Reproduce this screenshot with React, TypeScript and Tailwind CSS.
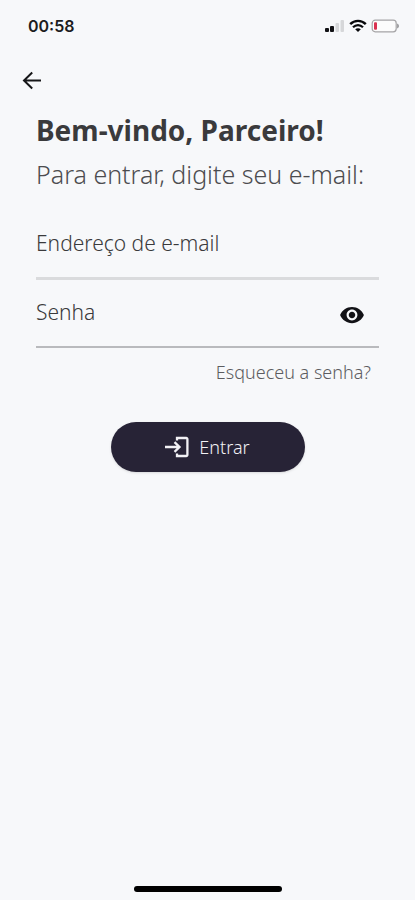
import { useState } from 'react';

const SignalIcon = () => (
  <svg width="20" height="14" viewBox="0 0 20 14" aria-hidden="true">
    <rect x="0" y="9" width="4" height="4" rx="1" fill="#111114" />
    <rect x="5" y="7" width="4" height="6" rx="1" fill="#111114" />
    <rect x="10.5" y="4" width="3.5" height="9" rx="1" fill="#d6d7d9" />
    <rect x="15.5" y="1" width="3.5" height="12" rx="1" fill="#d6d7d9" />
  </svg>
);

const WifiIcon = () => (
  <svg width="18" height="14" viewBox="0 0 18 14" fill="none" stroke="#08080a" aria-hidden="true">
    <path d="M1.2 5.2C5.6 .7 12.4 .7 16.8 5.2" strokeWidth="2.4" />
    <path d="M4 8.2c2.9-2.9 7.1-2.9 10 0" strokeWidth="2.2" />
    <path d="M9 13 6.2 10.3c1.6-1.5 4-1.5 5.6 0z" fill="#08080a" stroke="none" />
  </svg>
);

const BatteryIcon = () => (
  <svg width="28" height="14" viewBox="0 0 28 14" aria-hidden="true">
    <rect x="1.2" y="1.2" width="24" height="11.6" rx="3" fill="#fcfcfc" stroke="#a5a4a6" strokeWidth="1.2" />
    <rect x="3" y="3.2" width="3" height="7.6" rx="1" fill="#d9304f" />
    <path d="M26.2 4.6c2.2 .8 2.2 4 0 4.8z" fill="#8e8e91" />
  </svg>
);

const BackIcon = () => (
  <svg width="24" height="24" viewBox="0 0 24 24" fill="none" stroke="#161618" strokeWidth="2" aria-hidden="true">
    <path d="M21 12.5H4.5M12.2 4.5 4 12.5l8.2 8" />
  </svg>
);

const EyeIcon = () => (
  <svg width="26" height="26" viewBox="0 0 24 24" fill="#121216" aria-hidden="true">
    <path d="M12 4.5C7 4.5 2.73 7.61 1 12c1.73 4.39 6 7.5 11 7.5s9.27-3.11 11-7.5c-1.73-4.39-6-7.5-11-7.5zM12 17c-2.76 0-5-2.24-5-5s2.24-5 5-5 5 2.24 5 5-2.24 5-5 5zm0-8c-1.66 0-3 1.34-3 3s1.34 3 3 3 3-1.34 3-3-1.34-3-3-3z" />
  </svg>
);

const EnterIcon = () => (
  <svg width="24" height="24" viewBox="0 0 24 24" fill="none" stroke="#f2f1f5" strokeWidth="2.3" aria-hidden="true">
    <path d="M0 12h14M9.5 7.2l5 4.8-5 4.8" />
    <path d="M12 5.6V3h9.2a1.2 1.2 0 0 1 1.2 1.2v15.6a1.2 1.2 0 0 1-1.2 1.2H12v-2.6" />
  </svg>
);

const App = () => {
  const [email, setEmail] = useState('');
  const [password, setPassword] = useState('');
  const [showPassword, setShowPassword] = useState(false);

  return (
    <div className="flex min-h-screen flex-col bg-[#f7f8fa] font-['Noto_Sans',sans-serif] text-[#3a3a3c]">
      <div className="flex h-13 items-center justify-between pr-4 pl-7">
        <span className="font-['Inter',sans-serif] text-base font-semibold text-[#1c1c1e]">00:58</span>
        <div className="flex items-center gap-1">
          <SignalIcon />
          <WifiIcon />
          <BatteryIcon />
        </div>
      </div>

      <header className="flex h-14 items-center px-5">
        <button type="button" aria-label="Voltar">
          <BackIcon />
        </button>
      </header>

      <main className="px-9">
        <h1 className="mt-1 text-[28px] leading-9 font-bold">Bem-vindo, Parceiro!</h1>
        <p className="mt-2 text-[25px] leading-9 font-light text-[#4c4c4f]">Para entrar, digite seu e-mail:</p>

        <form className="mt-[37px]" onSubmit={(e) => e.preventDefault()}>
          <div className="flex flex-col border-b-3 border-[#dadbdd]">
            <label htmlFor="email" className="text-[21px] leading-7 font-light">
              Endereço de e-mail
            </label>
            <input
              id="email"
              type="email"
              value={email}
              onChange={(e) => setEmail(e.target.value)}
              className="h-5 w-full bg-transparent text-base outline-none"
            />
          </div>

          <div className="mt-[18px] flex items-start border-b-2 border-[#b9babd] pr-[14px]">
            <div className="flex min-w-0 flex-1 flex-col">
              <label htmlFor="password" className="text-[21px] leading-7 font-light">
                Senha
              </label>
              <input
                id="password"
                type={showPassword ? 'text' : 'password'}
                value={password}
                onChange={(e) => setPassword(e.target.value)}
                className="h-5 w-full bg-transparent text-base outline-none"
              />
            </div>
            <button
              type="button"
              aria-label="Mostrar senha"
              className="pt-1"
              onClick={() => setShowPassword(!showPassword)}
            >
              <EyeIcon />
            </button>
          </div>

          <div className="mt-3 flex justify-end pr-2">
            <a href="#" className="text-lg leading-6 font-light text-[#5c5c60]">
              Esqueceu a senha?
            </a>
          </div>

          <button
            type="submit"
            className="mx-auto mt-[38px] flex h-[50px] w-[194px] items-center justify-center gap-[10px] rounded-full bg-[#272336] text-lg font-light text-[#f2f1f5] shadow"
          >
            <EnterIcon />
            Entrar
          </button>
        </form>
      </main>

      <div className="mx-auto mt-auto mb-2 h-[6px] w-[148px] rounded-full bg-black" />
    </div>
  );
};

export default App;
